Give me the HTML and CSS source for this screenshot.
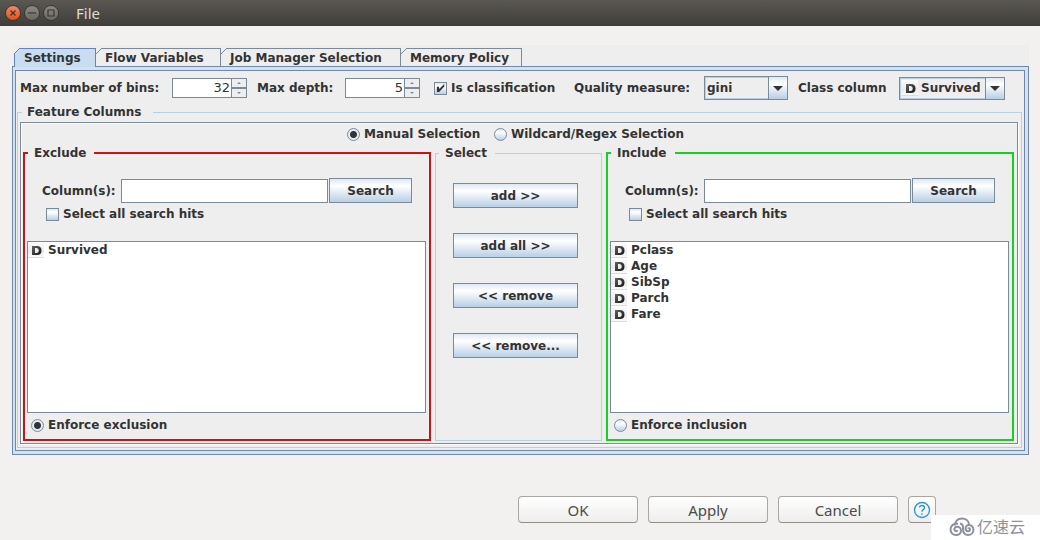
FILE: index.html
```html
<!DOCTYPE html>
<html lang="en">
<head>
<meta charset="utf-8">
<title>File</title>
<link rel="stylesheet" href="styles.css">
</head>
<body>
<svg class="defs" aria-hidden="true">
  <defs>
    <linearGradient id="tile" x1="0" y1="0" x2="0" y2="1"><stop offset="0" stop-color="#fdfdfd"/><stop offset=".6" stop-color="#ebebeb"/><stop offset="1" stop-color="#fdfdfd"/></linearGradient>
    <linearGradient id="ink" x1="0" y1="0" x2="1" y2="1"><stop offset="0" stop-color="#666"/><stop offset="1" stop-color="#111"/></linearGradient>
    <symbol id="double" viewBox="0 0 16 16">
      <rect width="16" height="16" fill="url(#tile)"/>
      <path d="M0 15.5H16" stroke="#ddd"/>
      <path fill="url(#ink)" fill-rule="evenodd" d="M4 4H9Q13.500 4 13.500 8.500Q13.500 13 9 13H4ZM7 6V11H8.500Q10.800 11 10.800 8.500Q10.800 6 8.500 6Z"/>
    </symbol>
  </defs>
</svg>
<header class="titlebar">
  <button class="winbtn winbtn-close" aria-label="Close"><svg viewBox="0 0 14 14"><path d="M4.500 4.500L9.500 9.500M9.500 4.500L4.500 9.500"/></svg></button>
  <button class="winbtn" aria-label="Minimize"><svg viewBox="0 0 14 14"><path d="M3 7H11"/></svg></button>
  <button class="winbtn" aria-label="Maximize"><svg viewBox="0 0 14 14"><path d="M4 4H10V10H4Z"/></svg></button>
  <span class="title">File</span>
</header>
<main class="dialog">
  <nav class="tabs" role="tablist">
    <button class="tab tab-active" role="tab" aria-selected="true">Settings</button>
    <button class="tab" role="tab">Flow Variables</button>
    <button class="tab" role="tab">Job Manager Selection</button>
    <button class="tab" role="tab">Memory Policy</button>
  </nav>
  <div class="frame">
    <div class="pane">
      <div class="options">
        <label class="label-bins" for="bins">Max number of bins:</label>
        <span class="spinner"><input id="bins" type="number" value="32"><span class="steps"><button aria-label="More bins"><i class="up"></i></button><button aria-label="Fewer bins"><i class="down"></i></button></span></span>
        <label class="label-depth" for="depth">Max depth:</label>
        <span class="spinner"><input id="depth" type="number" value="5"><span class="steps"><button aria-label="Deeper"><i class="up"></i></button><button aria-label="Shallower"><i class="down"></i></button></span></span>
        <label class="choice classification"><input type="checkbox" checked>Is classification</label>
        <label class="label-quality" for="quality">Quality measure:</label>
        <span class="combo combo-quality"><select id="quality"><option>gini</option></select><span class="arrow"><i></i></span></span>
        <label class="label-class" for="class">Class column</label>
        <span class="combo combo-class"><svg class="type"><use href="#double"/></svg><select id="class"><option>Survived</option></select><span class="arrow"><i></i></span></span>
      </div>
      <fieldset class="features">
        <legend>Feature Columns</legend>
        <div class="chooser">
          <div class="modes">
            <label class="choice mode-manual"><input type="radio" name="mode" checked>Manual Selection</label>
            <label class="choice mode-pattern"><input type="radio" name="mode">Wildcard/Regex Selection</label>
          </div>
          <div class="groups">
            <fieldset class="group exclude">
              <legend>Exclude</legend>
              <div class="search"><label for="find-out">Column(s):</label><input id="find-out" type="text"><button class="metal">Search</button></div>
              <label class="choice hits"><input type="checkbox">Select all search hits</label>
              <ul class="list">
                <li><svg class="type"><use href="#double"/></svg>Survived</li>
              </ul>
              <label class="choice enforce"><input type="radio" name="enforce" checked>Enforce exclusion</label>
            </fieldset>
            <fieldset class="group select">
              <legend>Select</legend>
              <div class="moves">
                <button class="metal">add &gt;&gt;</button>
                <button class="metal">add all &gt;&gt;</button>
                <button class="metal">&lt;&lt; remove</button>
                <button class="metal">&lt;&lt; remove...</button>
              </div>
            </fieldset>
            <fieldset class="group include">
              <legend>Include</legend>
              <div class="search"><label for="find-in">Column(s):</label><input id="find-in" type="text"><button class="metal">Search</button></div>
              <label class="choice hits"><input type="checkbox">Select all search hits</label>
              <ul class="list">
                <li><svg class="type"><use href="#double"/></svg>Pclass</li>
                <li><svg class="type"><use href="#double"/></svg>Age</li>
                <li><svg class="type"><use href="#double"/></svg>SibSp</li>
                <li><svg class="type"><use href="#double"/></svg>Parch</li>
                <li><svg class="type"><use href="#double"/></svg>Fare</li>
              </ul>
              <label class="choice enforce"><input type="radio" name="enforce">Enforce inclusion</label>
            </fieldset>
          </div>
        </div>
      </fieldset>
    </div>
  </div>
</main>
<footer class="actions">
  <button class="action">OK</button>
  <button class="action">Apply</button>
  <button class="action">Cancel</button>
  <button class="action action-help" aria-label="Help"><svg viewBox="0 0 18 18"><circle cx="9" cy="9" r="7.500"/><path d="M6.500 6.500Q6.800 4.500 9 4.500Q11.500 4.500 11.500 6.700Q11.500 8 10 8.800Q9 9.400 9 10.800M9 12.200V13.800"/></svg></button>
</footer>
<div class="watermark">
  <svg viewBox="0 0 26 20"><path d="M6 8.500C6 4 9 1.500 13 1.500C17 1.500 20 4 20 8M9 6.800C5 6 1.500 8.500 1.500 12.300C1.500 16 4 18 7 18C10 18 12 16 12 13.500C12 11 10 9.800 8.200 9.800C6 9.800 5 11.500 5.500 13C6 14.500 8 14.500 8.500 13.200M11 6.500C13.500 7 14.500 9 14 12C13.800 15.500 16 18 19 18C22 18 24.500 16 24.500 12.800C24.500 9.700 22 7.800 19.500 8C17 8.200 16 11 17 13C18 15 21 14.500 21 12.500C21 11 19.500 10.800 19 11.800"/></svg>
  <span>亿速云</span>
</div>
</body>
</html>
```
FILE: styles.css
```css
* { box-sizing: border-box; }
body {
  margin: 0;
  min-height: 100vh;
  display: flex;
  flex-direction: column;
  position: relative;
  background: #f2f1f0;
  color: #333;
  font: bold 12px/16px "DejaVu Sans", sans-serif;
}
button, input, select { font: inherit; color: inherit; margin: 0; }
fieldset { margin: 0; padding: 0; min-width: 0; border: 1px solid #b8cfe5; }
label { white-space: nowrap; }
.defs { position: absolute; width: 0; height: 0; }

.titlebar {
  height: 26px;
  flex: none;
  display: flex;
  align-items: center;
  gap: 3px;
  padding-left: 5px;
  background: linear-gradient(#5a5851, #3e3d39);
}
.winbtn {
  width: 16px;
  height: 16px;
  padding: 0;
  border: 1px solid #3a3935;
  border-radius: 50%;
  background: linear-gradient(#8b8982, #6a6861);
}
.winbtn-close { background: linear-gradient(#f58763, #e2501f); }
.winbtn svg { display: block; width: 14px; height: 14px; fill: none; stroke: #3a3732; stroke-width: 1.2; }
.title { margin-left: 14px; color: #dfdbd2; font: 15px/20px "Noto Sans", sans-serif; }

.dialog {
  flex: 1;
  display: flex;
  flex-direction: column;
  margin: 19px 11px 41px 12px;
  padding-top: 3px;
  background: #eee;
}
.tabs { display: grid; grid-template-columns: 82px 125px 180px 121px; padding-left: 2px; }
.tab {
  position: relative;
  height: 18px;
  padding: 0 0 0 9px;
  border: solid #7a8a99;
  border-width: 1px 1px 0 0;
  background: #eee;
  line-height: 16px;
  text-align: left;
  white-space: nowrap;
}
.tab::before {
  content: "";
  position: absolute;
  left: 0;
  top: -1px;
  width: 6px;
  height: 6px;
  background: linear-gradient(135deg, #eee 42%, #7a8a99 42% 56%, #eee 56%);
}
.tab-active {
  height: 19px;
  margin-bottom: -1px;
  z-index: 1;
  border-color: #6382bf;
  border-left-width: 1px;
  background: #c8ddf2;
}
.tab-active::before { left: -1px; background: linear-gradient(135deg, #eee 42%, #6382bf 42% 56%, #c8ddf2 56%); }
.frame {
  flex: 1;
  display: flex;
  padding: 3px 3px 3px 2px;
  border: 1px solid #6f88ab;
  background: #d3e2f1;
}
.pane {
  flex: 1;
  min-width: 0;
  display: flex;
  flex-direction: column;
  padding: 5px 2px 2px 1px;
  border: 1px solid #7188a5;
  background: #eee;
}
.options { display: flex; align-items: center; gap: 10px; height: 24px; padding-left: 3px; }
.label-bins { min-width: 142px; }
.label-depth { min-width: 78px; }
.label-quality { min-width: 120px; }
.label-class { min-width: 91px; }

.spinner { display: flex; width: 75px; height: 20px; }
.spinner input {
  flex: 1;
  min-width: 0;
  padding: 0 1px;
  border: 1px solid #7a8a99;
  border-right: 0;
  background: #fff;
  font-weight: normal;
  font-size: 13px;
  text-align: right;
  appearance: textfield;
}
.spinner input::-webkit-inner-spin-button { display: none; }
.steps { display: flex; flex-direction: column; width: 16px; }
.steps button {
  flex: 1;
  display: grid;
  place-items: center;
  padding: 0;
  border: 1px solid #7a8a99;
  background: #eee;
}
.up, .down { border: 2px solid transparent; }
.up { border-top: 0; border-bottom-color: #7a8a99; }
.down { border-bottom: 0; border-top-color: #7a8a99; }

.choice { display: flex; align-items: center; gap: 4px; }
.choice input {
  appearance: none;
  flex: none;
  width: 13px;
  height: 13px;
  border: 1px solid #7a8a99;
  background: linear-gradient(#dde8f3, #fff 30%, #b8cfe5);
}
.choice input[type="radio"] { border-radius: 50%; }
.choice input[type="radio"]:checked { background: radial-gradient(circle, #333 3px, #e4edf6 4px); }
.choice input[type="checkbox"]:checked {
  display: grid;
  place-items: center;
}
.choice input[type="checkbox"]:checked::before {
  content: "";
  width: 9px;
  height: 9px;
  background: #333;
  clip-path: polygon(10% 35%, 32% 35%, 35% 62%, 92% 5%, 92% 32%, 35% 95%, 10% 95%);
}
.classification { min-width: 126px; margin: 0 4px; }

.combo { position: relative; display: flex; border: 1px solid #7a8a99; box-shadow: inset 0 0 0 1px #b8cfe5; }
.combo select {
  appearance: none;
  width: 100%;
  padding: 0 22px 0 2px;
  border: 0;
  background: transparent;
}
.combo-quality { width: 84px; height: 24px; }
.combo-class { width: 106px; height: 23px; }
.combo-class select { padding-left: 21px; }
.combo .type { position: absolute; left: 2px; top: 2px; }
.arrow {
  position: absolute;
  right: 0;
  top: 0;
  bottom: 0;
  width: 19px;
  display: grid;
  place-items: center;
  border-left: 1px solid #7a8a99;
  background: linear-gradient(#dde8f3, #fff 30%, #b8cfe5);
  pointer-events: none;
}
.arrow i { border: 5px solid transparent; border-top-color: #333; border-bottom: 0; }

.features {
  flex: 1;
  display: flex;
  flex-direction: column;
  margin-top: 4px;
  padding: 2px 3px 3px 2px;
}
.features > legend { margin-left: 2px; padding: 0 12px 0 5px; }
.chooser {
  flex: 1;
  display: flex;
  flex-direction: column;
  padding: 3px 3px 2px 2px;
  border: 1px solid #7a8a99;
  box-shadow: 1px 1px #fff, inset 1px 1px #fafafa;
}
.modes { display: flex; justify-content: center; gap: 8px; height: 19px; padding-bottom: 3px; }
.mode-manual { min-width: 139px; }
.mode-pattern { min-width: 196px; }
.groups { flex: 1; display: grid; grid-template-columns: 1fr 167px 1fr; gap: 4px; }
.group { display: flex; flex-direction: column; }
.group > legend { margin-left: 3px; padding: 0 8px 0 6px; }
.exclude, .include { border-width: 2px; padding: 0 2px; }
.exclude { border-color: #c81414; }
.include { border-color: #16d022; }
.exclude > legend, .include > legend { margin-left: 1px; }
.search { display: flex; align-items: center; margin: 17px 15px 3px; }
.search input {
  flex: 1;
  min-width: 0;
  height: 24px;
  margin-left: 5px;
  margin-right: 1px;
  padding: 0 3px;
  border: 1px solid #7a8a99;
  background: #fff;
}
.metal {
  height: 25px;
  padding: 0;
  border: 1px solid #7a8a99;
  background: linear-gradient(#dde8f3, #fff 30%, #b8cfe5);
}
.search .metal { width: 83px; }
.hits { margin-left: 19px; }
.list {
  flex: 1;
  min-height: 82px;
  margin: 19px 1px 4px 0;
  padding: 0;
  list-style: none;
  border: 1px solid #7a8a99;
  background: #fff;
}
.list li { display: flex; gap: 4px; height: 16px; }
.type { flex: none; width: 16px; height: 16px; }
.enforce { margin: 0 0 6px 4px; }
.moves { display: flex; flex-direction: column; gap: 25px; padding: 22px 23px 0 17px; }

.actions { display: flex; justify-content: flex-end; gap: 10px; padding: 0 104px 17px 0; }
.action {
  width: 120px;
  height: 27px;
  padding: 0;
  border: 1px solid #aaa6a1;
  border-bottom-color: #918d89;
  border-radius: 4px;
  background: linear-gradient(#fff, #ededec);
  color: #4c4c4c;
  font: 15px/20px "Noto Sans", sans-serif;
}
.action-help { width: 28px; display: grid; place-items: center; }
.action-help svg { width: 18px; height: 18px; fill: none; stroke: #2f96dc; stroke-width: 1.4; }
.watermark {
  position: absolute;
  right: 0;
  bottom: 0;
  width: 109px;
  height: 25px;
  display: flex;
  align-items: center;
  gap: 2px;
  padding: 0 0 2px 18px;
  background: #fff;
  color: #8c919b;
  font: normal 16px/23px "Noto Sans CJK SC", sans-serif;
}
.watermark svg { width: 26px; height: 20px; fill: none; stroke: #8c919b; stroke-width: 2; }
```
